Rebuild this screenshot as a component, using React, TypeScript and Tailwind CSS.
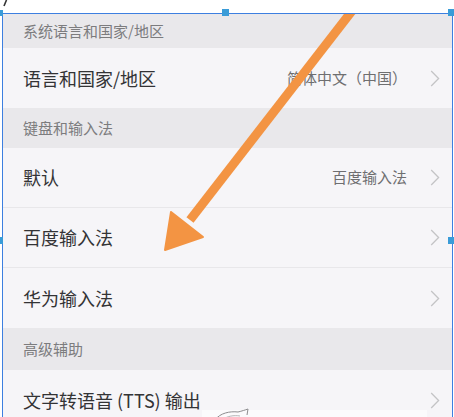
import React from "react";

const Chevron = () => (
  <svg width="10" height="17" viewBox="0 0 10 17" className="shrink-0">
    <path d="M1.2 1 L8.6 8.5 L1.2 16" fill="none" stroke="#c4c4c6" strokeWidth="1.3" strokeLinejoin="miter" />
  </svg>
);

const Header = ({ text, h }: { text: string; h: string }) => (
  <div className={`flex items-center bg-[#e9e8eb] pl-[20px] text-[15px] text-[#7c7c7e] ${h}`}>{text}</div>
);

const Row = ({ text, value, divider }: { text: string; value?: string; divider?: boolean }) => (
  <div
    className={`flex items-center justify-between bg-[#f6f5f8] pl-[20px] pr-[12px] ${
      divider ? "h-[60px] border-b border-[#e8e7ea]" : "h-[60px]"
    }`}
  >
    <span className="text-[18px] text-[#333335]">{text}</span>
    <div className="flex items-center gap-[23px]">
      {value ? <span className="text-[15px] text-[#6e6e70]">{value}</span> : null}
      <Chevron />
    </div>
  </div>
);

export default function App() {
  return (
    <div
      className="relative h-[417px] w-[454px] overflow-hidden bg-white"
      style={{ fontFamily: '"Noto Sans CJK SC", "Noto Sans", sans-serif' }}
    >
      {/* partial glyph at top-left */}
      <svg className="absolute left-[2px] top-0" width="6" height="7" viewBox="0 0 6 7">
        <path d="M4.5 0 L2 6" stroke="#333" strokeWidth="1.6" />
      </svg>

      <div className="pt-[13px]">
        <div className="relative ml-[2px] h-[404px] w-[451px] overflow-hidden border-x border-t border-[#3d7fe0]">
          <Header text="系统语言和国家/地区" h="h-[34px]" />
          <Row text="语言和国家/地区" value="简体中文（中国）" />
          <Header text="键盘和输入法" h="h-[40px]" />
          <Row text="默认" value="百度输入法" divider />
          <Row text="百度输入法" divider />
          <Row text="华为输入法" />
          <Header text="高级辅助" h="h-[42px]" />
          <Row text="文字转语音 (TTS) 输出" />

          {/* orange arrow overlay (page coords shifted by frame offset 3,14) */}
          <svg className="pointer-events-none absolute left-[-3px] top-[-14px]" width="454" height="417" viewBox="0 0 454 417">
            <line x1="362" y1="-2" x2="190" y2="220" stroke="#f39443" strokeWidth="9" />
            <polygon points="165,250 171,212 203,237" fill="#f39443" stroke="#f39443" strokeWidth="2" strokeLinejoin="round" />
          </svg>

          {/* bottom watermark strip */}
          <div className="absolute left-[199px] top-[396px] h-[10px] w-[225px] bg-[#fbfbfc]" />
          <svg className="pointer-events-none absolute left-[209px] top-[394px]" width="40" height="12" viewBox="0 0 40 12">
            <path d="M3 12 C8 5 18 3 26 4 C30 3 33 2 36 1 L35 7" fill="none" stroke="#8d8d8f" strokeWidth="1" />
            <path d="M10 12 C15 8 22 7 28 8" fill="none" stroke="#a5a5a7" strokeWidth="0.8" />
          </svg>
        </div>
      </div>

      {/* selection handles */}
      <div className="absolute left-[-3px] top-[10px] h-[6px] w-[6px] bg-[#3a9cd8]" />
      <div className="absolute left-[222px] top-[9px] h-[7px] w-[7px] bg-[#3a9cd8]" />
      <div className="absolute left-[448px] top-[9px] h-[7px] w-[7px] bg-[#3a9cd8]" />
      <div className="absolute left-[-3px] top-[237px] h-[7px] w-[6px] bg-[#3a9cd8]" />
      <div className="absolute left-[448px] top-[237px] h-[7px] w-[7px] bg-[#3a9cd8]" />
    </div>
  );
}
